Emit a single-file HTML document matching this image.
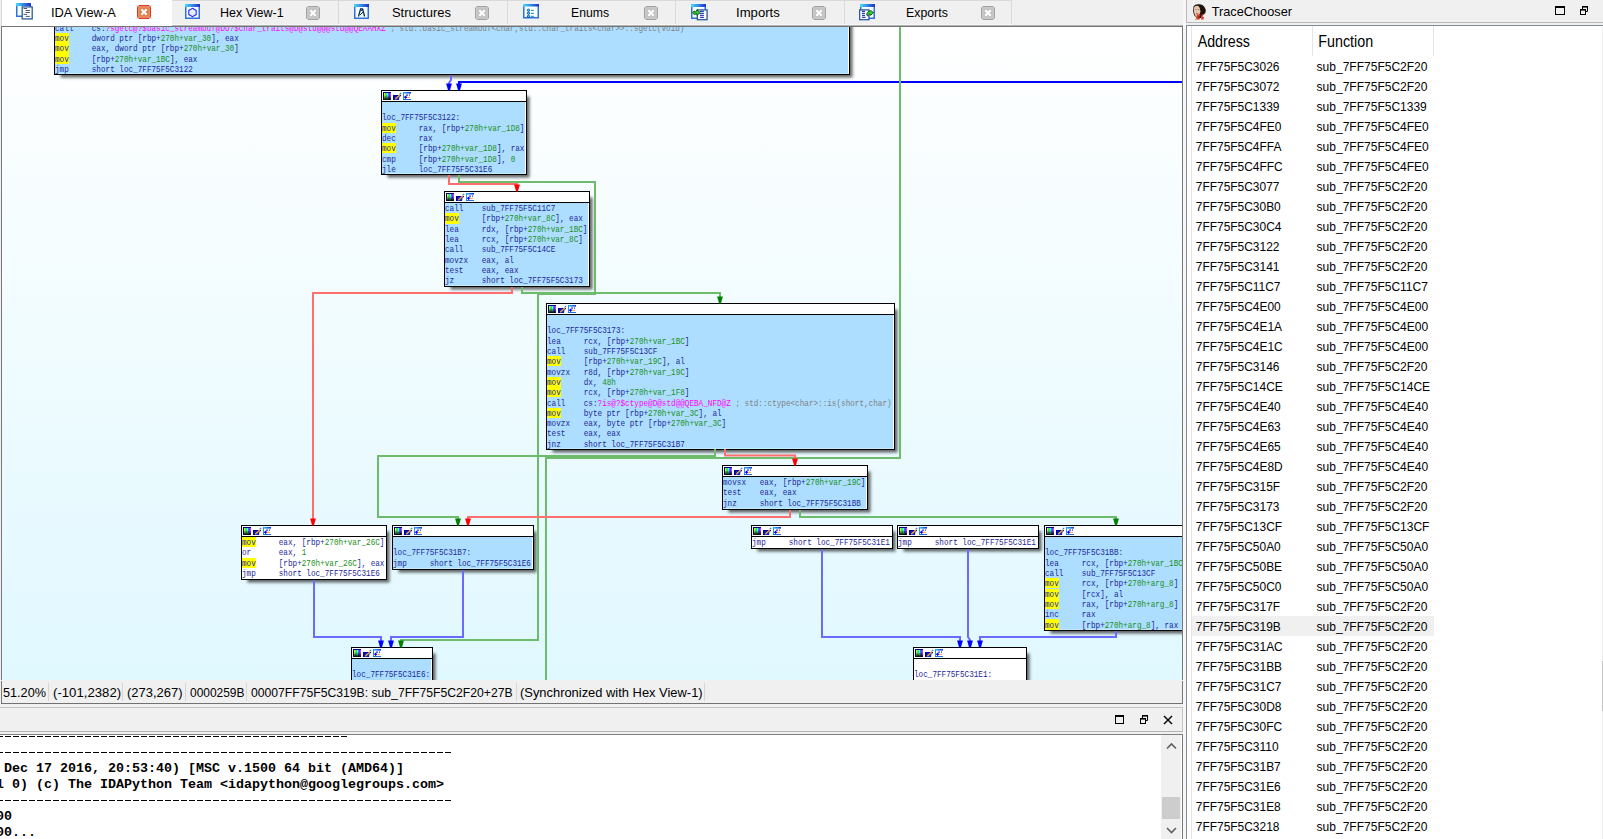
<!DOCTYPE html>
<html><head><meta charset="utf-8"><style>
*{box-sizing:border-box}
html,body{margin:0;padding:0}
body{width:1603px;height:839px;background:#f0f0f0;position:relative;overflow:hidden;font-family:"Liberation Sans",sans-serif;color:#000}
.abs{position:absolute}
.tx{position:absolute;white-space:nowrap;line-height:1}
#graph{position:absolute;left:2px;top:27px;width:1180px;height:653px;overflow:hidden;background:linear-gradient(#ffffff,#e0f8ff)}
.blk{position:absolute;border:1px solid #000;background:#fff;box-shadow:4px 4px 3px -1.5px rgba(0,0,0,.62)}
.hd{position:absolute;left:0;top:0;right:0;background:#fff;border-bottom:1px solid #000}
.hd .ic{position:absolute;left:1px;top:1px}
.bd{position:absolute;left:0;right:0;bottom:0;border-right:1px solid #fff;border-bottom:1px solid #c4eafe}
.bd pre{position:absolute;left:0;margin:0;font-family:"Liberation Mono",monospace;font-size:9.2px;transform:scaleX(0.8333);transform-origin:0 0;line-height:10.3px;color:#1c2898;white-space:pre}
.yb{position:absolute;left:0;width:14px;height:10.3px;background:#ffff00}
i{font-style:normal}
.g{color:#1a901a}.m{color:#ff00ff}.c{color:#808080}
#edges{position:absolute;left:0;top:0}
pre.out{position:absolute;margin:0;font-family:"Liberation Mono",monospace;font-weight:bold;font-size:13.33px;line-height:16px;white-space:pre;color:#000}
</style></head><body>
<div class="abs" style="left:1px;top:0;width:171px;height:26px;background:#fff;border-left:1px solid #d9d9d9"></div><div class="abs" style="left:16px;top:3px;line-height:0"><svg width="18" height="18" viewBox="0 0 18 18"><defs><linearGradient id="tg_ida" x1="0" x2="1"><stop offset="0" stop-color="#48dcff"/><stop offset="1" stop-color="#2030c8"/></linearGradient></defs><rect x="0.75" y="0.75" width="13.5" height="12.5" fill="#f6ffff" stroke="#2f70dc" stroke-width="1.5"/><rect x="0" y="0" width="15" height="3" fill="url(#tg_ida)"/><rect x="6.2" y="3.9" width="10" height="12" fill="#fff" stroke="#2a5c9c" stroke-width="1.3"/><path d="M7.6 5.5h3.6M9.6 7.5h4.3M9.6 9.5h4.3M7.6 11.4h3.6M9.6 13.4h4.3" stroke="#505860" stroke-width="1"/></svg></div><div class="tx" style="left:51.25px;top:7.32px;font-size:12.9px;transform:scaleX(0.9966);transform-origin:0 0">IDA View-A</div><div class="abs" style="left:137px;top:5px;line-height:0"><svg width="14" height="14" viewBox="0 0 14 14"><path d="M2 0.5H12L13.5 2V12L12 13.5H2L0.5 12V2Z" fill="#e27a4c" stroke="#de3420"/><rect x="1.9" y="1.9" width="10.2" height="10.2" fill="none" stroke="#f2a684" stroke-width="0.7"/><path d="M4.3 4.3L9.7 9.7M9.7 4.3L4.3 9.7" stroke="#fff" stroke-width="2.1"/></svg></div><div class="abs" style="left:172px;top:0;width:167px;height:26px;background:#f0f0f0;border-top:1px solid #d9d9d9;border-right:1px solid #d9d9d9"></div><div class="abs" style="left:172px;top:24px;width:167px;height:1px;background:#f8f8f8"></div><div class="abs" style="left:185px;top:4px;line-height:0"><svg width="18" height="18" viewBox="0 0 18 18"><defs><linearGradient id="tg_hex" x1="0" x2="1"><stop offset="0" stop-color="#48dcff"/><stop offset="1" stop-color="#2030c8"/></linearGradient></defs><rect x="0.75" y="0.75" width="13.5" height="13.5" fill="#f6ffff" stroke="#2f70dc" stroke-width="1.5"/><rect x="0" y="0" width="15" height="3" fill="url(#tg_hex)"/><path d="M7.5 4.3L11.2 6.4V10.6L7.5 12.7L3.8 10.6V6.4Z" fill="#e4eeff" stroke="#2828ff" stroke-width="1.1"/></svg></div><div class="tx" style="left:220.3px;top:7.32px;font-size:12.9px;transform:scaleX(0.9697);transform-origin:0 0">Hex View-1</div><div class="abs" style="left:306px;top:6px;line-height:0"><svg width="14" height="14" viewBox="0 0 14 14"><path d="M2 0.5H12L13.5 2V12L12 13.5H2L0.5 12V2Z" fill="#c2c2c2" stroke="#a2a2a2"/><rect x="1.9" y="1.9" width="10.2" height="10.2" fill="none" stroke="#d0d0d0" stroke-width="0.7"/><path d="M4.3 4.3L9.7 9.7M9.7 4.3L4.3 9.7" stroke="#fff" stroke-width="2.1"/></svg></div><div class="abs" style="left:339px;top:0;width:169px;height:26px;background:#f0f0f0;border-top:1px solid #d9d9d9;border-right:1px solid #d9d9d9"></div><div class="abs" style="left:339px;top:24px;width:169px;height:1px;background:#f8f8f8"></div><div class="abs" style="left:354px;top:4px;line-height:0"><svg width="18" height="18" viewBox="0 0 18 18"><defs><linearGradient id="tg_str" x1="0" x2="1"><stop offset="0" stop-color="#48dcff"/><stop offset="1" stop-color="#2030c8"/></linearGradient></defs><rect x="0.75" y="0.75" width="13.5" height="13.5" fill="#f6ffff" stroke="#2f70dc" stroke-width="1.5"/><rect x="0" y="0" width="15" height="3" fill="url(#tg_str)"/><path d="M4.5 12.5L6.6 4.8H8.6L10.6 12.5" fill="none" stroke="#0a2a5a" stroke-width="1.3"/><path d="M6.5 6.2h2.3" stroke="#0a2a5a" stroke-width="1.2"/><path d="M6 11L9 8" stroke="#0a2a5a" stroke-width="1"/></svg></div><div class="tx" style="left:392.4px;top:7.32px;font-size:12.9px;transform:scaleX(1.0026);transform-origin:0 0">Structures</div><div class="abs" style="left:475px;top:6px;line-height:0"><svg width="14" height="14" viewBox="0 0 14 14"><path d="M2 0.5H12L13.5 2V12L12 13.5H2L0.5 12V2Z" fill="#c2c2c2" stroke="#a2a2a2"/><rect x="1.9" y="1.9" width="10.2" height="10.2" fill="none" stroke="#d0d0d0" stroke-width="0.7"/><path d="M4.3 4.3L9.7 9.7M9.7 4.3L4.3 9.7" stroke="#fff" stroke-width="2.1"/></svg></div><div class="abs" style="left:508px;top:0;width:168px;height:26px;background:#f0f0f0;border-top:1px solid #d9d9d9;border-right:1px solid #d9d9d9"></div><div class="abs" style="left:508px;top:24px;width:168px;height:1px;background:#f8f8f8"></div><div class="abs" style="left:523px;top:4px;line-height:0"><svg width="18" height="18" viewBox="0 0 18 18"><g transform="translate(0,-0.5)"><defs><linearGradient id="tg_enum" x1="0" x2="1"><stop offset="0" stop-color="#48dcff"/><stop offset="1" stop-color="#2030c8"/></linearGradient></defs><rect x="0.75" y="0.75" width="14.5" height="13.5" fill="#f6ffff" stroke="#2f70dc" stroke-width="1.5"/><rect x="0" y="0" width="16" height="3" fill="url(#tg_enum)"/></g><g transform="translate(0,-0.1) scale(1,0.75)"><path d="M5.5 6.9L7.1 8.5L5.5 10.1L3.9 8.5Z" fill="#20e8ff" stroke="#002a80" stroke-width="0.9"/><path d="M8 8.5h2.8" stroke="#0050c8" stroke-width="1.1"/><path d="M5.5 10.9L7.1 12.5L5.5 14.1L3.9 12.5Z" fill="#20e8ff" stroke="#002a80" stroke-width="0.9"/><path d="M8 12.5h2.8" stroke="#0050c8" stroke-width="1.1"/><path d="M5.5 14.9L7.1 16.5L5.5 18.1L3.9 16.5Z" fill="#20e8ff" stroke="#002a80" stroke-width="0.9"/><path d="M8 16.5h2.8" stroke="#0050c8" stroke-width="1.1"/></g></svg></div><div class="tx" style="left:571px;top:7.32px;font-size:12.9px;transform:scaleX(0.9470);transform-origin:0 0">Enums</div><div class="abs" style="left:643.5px;top:6px;line-height:0"><svg width="14" height="14" viewBox="0 0 14 14"><path d="M2 0.5H12L13.5 2V12L12 13.5H2L0.5 12V2Z" fill="#c2c2c2" stroke="#a2a2a2"/><rect x="1.9" y="1.9" width="10.2" height="10.2" fill="none" stroke="#d0d0d0" stroke-width="0.7"/><path d="M4.3 4.3L9.7 9.7M9.7 4.3L4.3 9.7" stroke="#fff" stroke-width="2.1"/></svg></div><div class="abs" style="left:676px;top:0;width:169px;height:26px;background:#f0f0f0;border-top:1px solid #d9d9d9;border-right:1px solid #d9d9d9"></div><div class="abs" style="left:676px;top:24px;width:169px;height:1px;background:#f8f8f8"></div><div class="abs" style="left:691px;top:4px;line-height:0"><svg width="18" height="18" viewBox="0 0 18 18"><defs><linearGradient id="tg_imp" x1="0" x2="1"><stop offset="0" stop-color="#48dcff"/><stop offset="1" stop-color="#2030c8"/></linearGradient></defs><rect x="0.75" y="0.75" width="13.5" height="13.5" fill="#f6ffff" stroke="#2f70dc" stroke-width="1.5"/><rect x="0" y="0" width="15" height="3" fill="url(#tg_imp)"/><rect x="6.3" y="5.9" width="9.8" height="9.8" fill="#fff" stroke="#2a5c9c" stroke-width="1.3"/><path d="M9 7.3h3.9M9 9.3h3.9M9 11.3h3.9M9 13.3h3.9" stroke="#0010b0" stroke-width="1"/><path d="M1.5 8.5L3.2 7L4.3 8.3L6 5.8L9.2 8.6L6 11.3L5.8 9.7L3 10.5Z" fill="#30d030" stroke="#004000" stroke-width="0.8"/></svg></div><div class="tx" style="left:736.2px;top:7.32px;font-size:12.9px;transform:scaleX(1.0190);transform-origin:0 0">Imports</div><div class="abs" style="left:812px;top:6px;line-height:0"><svg width="14" height="14" viewBox="0 0 14 14"><path d="M2 0.5H12L13.5 2V12L12 13.5H2L0.5 12V2Z" fill="#c2c2c2" stroke="#a2a2a2"/><rect x="1.9" y="1.9" width="10.2" height="10.2" fill="none" stroke="#d0d0d0" stroke-width="0.7"/><path d="M4.3 4.3L9.7 9.7M9.7 4.3L4.3 9.7" stroke="#fff" stroke-width="2.1"/></svg></div><div class="abs" style="left:845px;top:0;width:167px;height:26px;background:#f0f0f0;border-top:1px solid #d9d9d9;border-right:1px solid #d9d9d9"></div><div class="abs" style="left:845px;top:24px;width:167px;height:1px;background:#f8f8f8"></div><div class="abs" style="left:859px;top:4px;line-height:0"><svg width="18" height="18" viewBox="0 0 18 18"><defs><linearGradient id="tg_exp" x1="0" x2="1"><stop offset="0" stop-color="#48dcff"/><stop offset="1" stop-color="#2030c8"/></linearGradient></defs><rect x="1.75" y="0.75" width="13.5" height="13.5" fill="#f6ffff" stroke="#2f70dc" stroke-width="1.5"/><rect x="1" y="0" width="15" height="3" fill="url(#tg_exp)"/><rect x="0.65" y="5.9" width="9.3" height="9.8" fill="#fff" stroke="#2a5c9c" stroke-width="1.3"/><path d="M3 7.3h3M3 9.3h3M3 11.3h3M3 13.3h3.5" stroke="#0010b0" stroke-width="1"/><path d="M7.6 10L9 8L11.6 6.5L14.6 8.6L11.5 11.4L10.8 10L8.4 12Z" fill="#30d030" stroke="#004000" stroke-width="0.8"/></svg></div><div class="tx" style="left:906.2px;top:7.32px;font-size:12.9px;transform:scaleX(0.9565);transform-origin:0 0">Exports</div><div class="abs" style="left:981px;top:6px;line-height:0"><svg width="14" height="14" viewBox="0 0 14 14"><path d="M2 0.5H12L13.5 2V12L12 13.5H2L0.5 12V2Z" fill="#c2c2c2" stroke="#a2a2a2"/><rect x="1.9" y="1.9" width="10.2" height="10.2" fill="none" stroke="#d0d0d0" stroke-width="0.7"/><path d="M4.3 4.3L9.7 9.7M9.7 4.3L4.3 9.7" stroke="#fff" stroke-width="2.1"/></svg></div><div class="abs" style="left:172px;top:25px;width:1011px;height:1px;background:#b4b4b4"></div><div class="abs" style="left:1px;top:26px;width:1182px;height:678px;border:1px solid #787878;border-top-color:#747474"></div><div id="graph"><div class="blk" style="left:52px;top:-67px;width:796px;height:115px"><div class="bd" style="top:0px;background:#addeff"><div class="yb" style="top:71.80px"></div><div class="yb" style="top:82.10px"></div><div class="yb" style="top:92.40px"></div><pre style="top:62.70px">
call    cs:<i class="m">?sgetc@?$basic_streambuf@DU?$char_traits@D@std@@@std@@QEAAHXZ</i><i class="c"> ; std::basic_streambuf&lt;char,std::char_traits&lt;char&gt;&gt;::sgetc(void)</i>
mov     dword ptr [rbp+<i class="g">270h+var_30</i>], eax
mov     eax, dword ptr [rbp+<i class="g">270h+var_30</i>]
mov     [rbp+<i class="g">270h+var_1BC</i>], eax
jmp     short loc_7FF75F5C3122</pre></div></div><div class="blk" style="left:379px;top:63px;width:146px;height:85px"><div class="hd" style="height:11px"><svg class="ic" width="30" height="10" viewBox="0 0 30 10"><defs><linearGradient id="rb1" x1="0" x2="1"><stop offset="0" stop-color="#ffff40"/><stop offset=".3" stop-color="#20e020"/><stop offset=".5" stop-color="#40ffff"/><stop offset=".72" stop-color="#3030ff"/><stop offset="1" stop-color="#ff40ff"/></linearGradient><linearGradient id="dk1" x1="0" x2="0" y1="0" y2="1"><stop offset="0.3" stop-color="#000" stop-opacity="0"/><stop offset="1" stop-color="#000" stop-opacity="1"/></linearGradient><linearGradient id="lb1" x1="0" x2="1"><stop offset="0" stop-color="#30c8ff"/><stop offset="1" stop-color="#1030d0"/></linearGradient></defs><rect x="0" y="0" width="8" height="8" fill="#000080"/><rect x="1" y="1" width="7" height="7" fill="url(#rb1)"/><rect x="1" y="1" width="7" height="7" fill="url(#dk1)"/><path d="M10 3h8v1.3h-1.5L16 8H11.3H10z" fill="#0000a0"/><path d="M11.6 4.3h4.6l-0.6 3.5h-4z" fill="#1030c0"/><path d="M12.3 7.3L17 2.6" stroke="#ffa428" stroke-width="1.3"/><path d="M16.8 2.2L18.2 0.8" stroke="#2a88b0" stroke-width="1.2"/><rect x="20" y="0" width="8" height="1.6" fill="url(#lb1)"/><rect x="20" y="0" width="1" height="8" fill="#2a90f0"/><rect x="20" y="7" width="8" height="1" fill="#2070e0"/><rect x="23" y="2.6" width="2" height="1" fill="#0000ff"/><rect x="26" y="2.5" width="1" height="1.2" fill="#1030e0"/><rect x="21" y="4.6" width="3" height="1.2" fill="#0000ff"/><rect x="22" y="3.8" width="1.2" height="3" fill="#0000ff"/><rect x="24" y="4.8" width="3" height="1" fill="#ff9a30"/></svg></div><div class="bd" style="top:11px;background:#addeff;border-bottom-color:#c4eafe"><div class="yb" style="top:20.60px"></div><div class="yb" style="top:41.20px"></div><pre style="top:1.2px">

loc_7FF75F5C3122:
mov     rax, [rbp+<i class="g">270h+var_1D8</i>]
dec     rax
mov     [rbp+<i class="g">270h+var_1D8</i>], rax
cmp     [rbp+<i class="g">270h+var_1D8</i>], <i class="g">0</i>
jle     loc_7FF75F5C31E6</pre></div></div><div class="blk" style="left:442px;top:164px;width:146px;height:96px"><div class="hd" style="height:11px"><svg class="ic" width="30" height="10" viewBox="0 0 30 10"><defs><linearGradient id="rb2" x1="0" x2="1"><stop offset="0" stop-color="#ffff40"/><stop offset=".3" stop-color="#20e020"/><stop offset=".5" stop-color="#40ffff"/><stop offset=".72" stop-color="#3030ff"/><stop offset="1" stop-color="#ff40ff"/></linearGradient><linearGradient id="dk2" x1="0" x2="0" y1="0" y2="1"><stop offset="0.3" stop-color="#000" stop-opacity="0"/><stop offset="1" stop-color="#000" stop-opacity="1"/></linearGradient><linearGradient id="lb2" x1="0" x2="1"><stop offset="0" stop-color="#30c8ff"/><stop offset="1" stop-color="#1030d0"/></linearGradient></defs><rect x="0" y="0" width="8" height="8" fill="#000080"/><rect x="1" y="1" width="7" height="7" fill="url(#rb2)"/><rect x="1" y="1" width="7" height="7" fill="url(#dk2)"/><path d="M10 3h8v1.3h-1.5L16 8H11.3H10z" fill="#0000a0"/><path d="M11.6 4.3h4.6l-0.6 3.5h-4z" fill="#1030c0"/><path d="M12.3 7.3L17 2.6" stroke="#ffa428" stroke-width="1.3"/><path d="M16.8 2.2L18.2 0.8" stroke="#2a88b0" stroke-width="1.2"/><rect x="20" y="0" width="8" height="1.6" fill="url(#lb2)"/><rect x="20" y="0" width="1" height="8" fill="#2a90f0"/><rect x="20" y="7" width="8" height="1" fill="#2070e0"/><rect x="23" y="2.6" width="2" height="1" fill="#0000ff"/><rect x="26" y="2.5" width="1" height="1.2" fill="#1030e0"/><rect x="21" y="4.6" width="3" height="1.2" fill="#0000ff"/><rect x="22" y="3.8" width="1.2" height="3" fill="#0000ff"/><rect x="24" y="4.8" width="3" height="1" fill="#ff9a30"/></svg></div><div class="bd" style="top:11px;background:#addeff;border-bottom-color:#c4eafe"><div class="yb" style="top:10.30px"></div><pre style="top:1.2px">
call    sub_7FF75F5C11C7
mov     [rbp+<i class="g">270h+var_8C</i>], eax
lea     rdx, [rbp+<i class="g">270h+var_1BC</i>]
lea     rcx, [rbp+<i class="g">270h+var_8C</i>]
call    sub_7FF75F5C14CE
movzx   eax, al
test    eax, eax
jz      short loc_7FF75F5C3173</pre></div></div><div class="blk" style="left:544px;top:276px;width:349px;height:147px"><div class="hd" style="height:11px"><svg class="ic" width="30" height="10" viewBox="0 0 30 10"><defs><linearGradient id="rb3" x1="0" x2="1"><stop offset="0" stop-color="#ffff40"/><stop offset=".3" stop-color="#20e020"/><stop offset=".5" stop-color="#40ffff"/><stop offset=".72" stop-color="#3030ff"/><stop offset="1" stop-color="#ff40ff"/></linearGradient><linearGradient id="dk3" x1="0" x2="0" y1="0" y2="1"><stop offset="0.3" stop-color="#000" stop-opacity="0"/><stop offset="1" stop-color="#000" stop-opacity="1"/></linearGradient><linearGradient id="lb3" x1="0" x2="1"><stop offset="0" stop-color="#30c8ff"/><stop offset="1" stop-color="#1030d0"/></linearGradient></defs><rect x="0" y="0" width="8" height="8" fill="#000080"/><rect x="1" y="1" width="7" height="7" fill="url(#rb3)"/><rect x="1" y="1" width="7" height="7" fill="url(#dk3)"/><path d="M10 3h8v1.3h-1.5L16 8H11.3H10z" fill="#0000a0"/><path d="M11.6 4.3h4.6l-0.6 3.5h-4z" fill="#1030c0"/><path d="M12.3 7.3L17 2.6" stroke="#ffa428" stroke-width="1.3"/><path d="M16.8 2.2L18.2 0.8" stroke="#2a88b0" stroke-width="1.2"/><rect x="20" y="0" width="8" height="1.6" fill="url(#lb3)"/><rect x="20" y="0" width="1" height="8" fill="#2a90f0"/><rect x="20" y="7" width="8" height="1" fill="#2070e0"/><rect x="23" y="2.6" width="2" height="1" fill="#0000ff"/><rect x="26" y="2.5" width="1" height="1.2" fill="#1030e0"/><rect x="21" y="4.6" width="3" height="1.2" fill="#0000ff"/><rect x="22" y="3.8" width="1.2" height="3" fill="#0000ff"/><rect x="24" y="4.8" width="3" height="1" fill="#ff9a30"/></svg></div><div class="bd" style="top:11px;background:#addeff;border-bottom-color:#c4eafe"><div class="yb" style="top:41.20px"></div><div class="yb" style="top:61.80px"></div><div class="yb" style="top:72.10px"></div><div class="yb" style="top:92.70px"></div><pre style="top:1.2px">

loc_7FF75F5C3173:
lea     rcx, [rbp+<i class="g">270h+var_1BC</i>]
call    sub_7FF75F5C13CF
mov     [rbp+<i class="g">270h+var_19C</i>], al
movzx   r8d, [rbp+<i class="g">270h+var_19C</i>]
mov     dx, <i class="g">48h</i>
mov     rcx, [rbp+<i class="g">270h+var_1F8</i>]
call    cs:<i class="m">?is@?$ctype@D@std@@QEBA_NFD@Z</i><i class="c"> ; std::ctype&lt;char&gt;::is(short,char)</i>
mov     byte ptr [rbp+<i class="g">270h+var_3C</i>], al
movzx   eax, byte ptr [rbp+<i class="g">270h+var_3C</i>]
test    eax, eax
jnz     short loc_7FF75F5C31B7</pre></div></div><div class="blk" style="left:720px;top:438px;width:146px;height:45px"><div class="hd" style="height:11px"><svg class="ic" width="30" height="10" viewBox="0 0 30 10"><defs><linearGradient id="rb4" x1="0" x2="1"><stop offset="0" stop-color="#ffff40"/><stop offset=".3" stop-color="#20e020"/><stop offset=".5" stop-color="#40ffff"/><stop offset=".72" stop-color="#3030ff"/><stop offset="1" stop-color="#ff40ff"/></linearGradient><linearGradient id="dk4" x1="0" x2="0" y1="0" y2="1"><stop offset="0.3" stop-color="#000" stop-opacity="0"/><stop offset="1" stop-color="#000" stop-opacity="1"/></linearGradient><linearGradient id="lb4" x1="0" x2="1"><stop offset="0" stop-color="#30c8ff"/><stop offset="1" stop-color="#1030d0"/></linearGradient></defs><rect x="0" y="0" width="8" height="8" fill="#000080"/><rect x="1" y="1" width="7" height="7" fill="url(#rb4)"/><rect x="1" y="1" width="7" height="7" fill="url(#dk4)"/><path d="M10 3h8v1.3h-1.5L16 8H11.3H10z" fill="#0000a0"/><path d="M11.6 4.3h4.6l-0.6 3.5h-4z" fill="#1030c0"/><path d="M12.3 7.3L17 2.6" stroke="#ffa428" stroke-width="1.3"/><path d="M16.8 2.2L18.2 0.8" stroke="#2a88b0" stroke-width="1.2"/><rect x="20" y="0" width="8" height="1.6" fill="url(#lb4)"/><rect x="20" y="0" width="1" height="8" fill="#2a90f0"/><rect x="20" y="7" width="8" height="1" fill="#2070e0"/><rect x="23" y="2.6" width="2" height="1" fill="#0000ff"/><rect x="26" y="2.5" width="1" height="1.2" fill="#1030e0"/><rect x="21" y="4.6" width="3" height="1.2" fill="#0000ff"/><rect x="22" y="3.8" width="1.2" height="3" fill="#0000ff"/><rect x="24" y="4.8" width="3" height="1" fill="#ff9a30"/></svg></div><div class="bd" style="top:11px;background:#addeff;border-bottom-color:#c4eafe"><pre style="top:1.2px">
movsx   eax, [rbp+<i class="g">270h+var_19C</i>]
test    eax, eax
jnz     short loc_7FF75F5C31BB</pre></div></div><div class="blk" style="left:239px;top:498px;width:146px;height:55px"><div class="hd" style="height:11px"><svg class="ic" width="30" height="10" viewBox="0 0 30 10"><defs><linearGradient id="rb5" x1="0" x2="1"><stop offset="0" stop-color="#ffff40"/><stop offset=".3" stop-color="#20e020"/><stop offset=".5" stop-color="#40ffff"/><stop offset=".72" stop-color="#3030ff"/><stop offset="1" stop-color="#ff40ff"/></linearGradient><linearGradient id="dk5" x1="0" x2="0" y1="0" y2="1"><stop offset="0.3" stop-color="#000" stop-opacity="0"/><stop offset="1" stop-color="#000" stop-opacity="1"/></linearGradient><linearGradient id="lb5" x1="0" x2="1"><stop offset="0" stop-color="#30c8ff"/><stop offset="1" stop-color="#1030d0"/></linearGradient></defs><rect x="0" y="0" width="8" height="8" fill="#000080"/><rect x="1" y="1" width="7" height="7" fill="url(#rb5)"/><rect x="1" y="1" width="7" height="7" fill="url(#dk5)"/><path d="M10 3h8v1.3h-1.5L16 8H11.3H10z" fill="#0000a0"/><path d="M11.6 4.3h4.6l-0.6 3.5h-4z" fill="#1030c0"/><path d="M12.3 7.3L17 2.6" stroke="#ffa428" stroke-width="1.3"/><path d="M16.8 2.2L18.2 0.8" stroke="#2a88b0" stroke-width="1.2"/><rect x="20" y="0" width="8" height="1.6" fill="url(#lb5)"/><rect x="20" y="0" width="1" height="8" fill="#2a90f0"/><rect x="20" y="7" width="8" height="1" fill="#2070e0"/><rect x="23" y="2.6" width="2" height="1" fill="#0000ff"/><rect x="26" y="2.5" width="1" height="1.2" fill="#1030e0"/><rect x="21" y="4.6" width="3" height="1.2" fill="#0000ff"/><rect x="22" y="3.8" width="1.2" height="3" fill="#0000ff"/><rect x="24" y="4.8" width="3" height="1" fill="#ff9a30"/></svg></div><div class="bd" style="top:11px;background:#ffffff;border-bottom-color:#fff"><div class="yb" style="top:0.00px"></div><div class="yb" style="top:20.60px"></div><pre style="top:1.2px">
mov     eax, [rbp+<i class="g">270h+var_26C</i>]
or      eax, <i class="g">1</i>
mov     [rbp+<i class="g">270h+var_26C</i>], eax
jmp     short loc_7FF75F5C31E6</pre></div></div><div class="blk" style="left:390px;top:498px;width:142px;height:45px"><div class="hd" style="height:11px"><svg class="ic" width="30" height="10" viewBox="0 0 30 10"><defs><linearGradient id="rb6" x1="0" x2="1"><stop offset="0" stop-color="#ffff40"/><stop offset=".3" stop-color="#20e020"/><stop offset=".5" stop-color="#40ffff"/><stop offset=".72" stop-color="#3030ff"/><stop offset="1" stop-color="#ff40ff"/></linearGradient><linearGradient id="dk6" x1="0" x2="0" y1="0" y2="1"><stop offset="0.3" stop-color="#000" stop-opacity="0"/><stop offset="1" stop-color="#000" stop-opacity="1"/></linearGradient><linearGradient id="lb6" x1="0" x2="1"><stop offset="0" stop-color="#30c8ff"/><stop offset="1" stop-color="#1030d0"/></linearGradient></defs><rect x="0" y="0" width="8" height="8" fill="#000080"/><rect x="1" y="1" width="7" height="7" fill="url(#rb6)"/><rect x="1" y="1" width="7" height="7" fill="url(#dk6)"/><path d="M10 3h8v1.3h-1.5L16 8H11.3H10z" fill="#0000a0"/><path d="M11.6 4.3h4.6l-0.6 3.5h-4z" fill="#1030c0"/><path d="M12.3 7.3L17 2.6" stroke="#ffa428" stroke-width="1.3"/><path d="M16.8 2.2L18.2 0.8" stroke="#2a88b0" stroke-width="1.2"/><rect x="20" y="0" width="8" height="1.6" fill="url(#lb6)"/><rect x="20" y="0" width="1" height="8" fill="#2a90f0"/><rect x="20" y="7" width="8" height="1" fill="#2070e0"/><rect x="23" y="2.6" width="2" height="1" fill="#0000ff"/><rect x="26" y="2.5" width="1" height="1.2" fill="#1030e0"/><rect x="21" y="4.6" width="3" height="1.2" fill="#0000ff"/><rect x="22" y="3.8" width="1.2" height="3" fill="#0000ff"/><rect x="24" y="4.8" width="3" height="1" fill="#ff9a30"/></svg></div><div class="bd" style="top:11px;background:#addeff;border-bottom-color:#c4eafe"><pre style="top:1.2px">

loc_7FF75F5C31B7:
jmp     short loc_7FF75F5C31E6</pre></div></div><div class="blk" style="left:749px;top:498px;width:142px;height:24px"><div class="hd" style="height:11px"><svg class="ic" width="30" height="10" viewBox="0 0 30 10"><defs><linearGradient id="rb7" x1="0" x2="1"><stop offset="0" stop-color="#ffff40"/><stop offset=".3" stop-color="#20e020"/><stop offset=".5" stop-color="#40ffff"/><stop offset=".72" stop-color="#3030ff"/><stop offset="1" stop-color="#ff40ff"/></linearGradient><linearGradient id="dk7" x1="0" x2="0" y1="0" y2="1"><stop offset="0.3" stop-color="#000" stop-opacity="0"/><stop offset="1" stop-color="#000" stop-opacity="1"/></linearGradient><linearGradient id="lb7" x1="0" x2="1"><stop offset="0" stop-color="#30c8ff"/><stop offset="1" stop-color="#1030d0"/></linearGradient></defs><rect x="0" y="0" width="8" height="8" fill="#000080"/><rect x="1" y="1" width="7" height="7" fill="url(#rb7)"/><rect x="1" y="1" width="7" height="7" fill="url(#dk7)"/><path d="M10 3h8v1.3h-1.5L16 8H11.3H10z" fill="#0000a0"/><path d="M11.6 4.3h4.6l-0.6 3.5h-4z" fill="#1030c0"/><path d="M12.3 7.3L17 2.6" stroke="#ffa428" stroke-width="1.3"/><path d="M16.8 2.2L18.2 0.8" stroke="#2a88b0" stroke-width="1.2"/><rect x="20" y="0" width="8" height="1.6" fill="url(#lb7)"/><rect x="20" y="0" width="1" height="8" fill="#2a90f0"/><rect x="20" y="7" width="8" height="1" fill="#2070e0"/><rect x="23" y="2.6" width="2" height="1" fill="#0000ff"/><rect x="26" y="2.5" width="1" height="1.2" fill="#1030e0"/><rect x="21" y="4.6" width="3" height="1.2" fill="#0000ff"/><rect x="22" y="3.8" width="1.2" height="3" fill="#0000ff"/><rect x="24" y="4.8" width="3" height="1" fill="#ff9a30"/></svg></div><div class="bd" style="top:11px;background:#ffffff;border-bottom-color:#fff"><pre style="top:1.2px">
jmp     short loc_7FF75F5C31E1</pre></div></div><div class="blk" style="left:895px;top:498px;width:142px;height:24px"><div class="hd" style="height:11px"><svg class="ic" width="30" height="10" viewBox="0 0 30 10"><defs><linearGradient id="rb8" x1="0" x2="1"><stop offset="0" stop-color="#ffff40"/><stop offset=".3" stop-color="#20e020"/><stop offset=".5" stop-color="#40ffff"/><stop offset=".72" stop-color="#3030ff"/><stop offset="1" stop-color="#ff40ff"/></linearGradient><linearGradient id="dk8" x1="0" x2="0" y1="0" y2="1"><stop offset="0.3" stop-color="#000" stop-opacity="0"/><stop offset="1" stop-color="#000" stop-opacity="1"/></linearGradient><linearGradient id="lb8" x1="0" x2="1"><stop offset="0" stop-color="#30c8ff"/><stop offset="1" stop-color="#1030d0"/></linearGradient></defs><rect x="0" y="0" width="8" height="8" fill="#000080"/><rect x="1" y="1" width="7" height="7" fill="url(#rb8)"/><rect x="1" y="1" width="7" height="7" fill="url(#dk8)"/><path d="M10 3h8v1.3h-1.5L16 8H11.3H10z" fill="#0000a0"/><path d="M11.6 4.3h4.6l-0.6 3.5h-4z" fill="#1030c0"/><path d="M12.3 7.3L17 2.6" stroke="#ffa428" stroke-width="1.3"/><path d="M16.8 2.2L18.2 0.8" stroke="#2a88b0" stroke-width="1.2"/><rect x="20" y="0" width="8" height="1.6" fill="url(#lb8)"/><rect x="20" y="0" width="1" height="8" fill="#2a90f0"/><rect x="20" y="7" width="8" height="1" fill="#2070e0"/><rect x="23" y="2.6" width="2" height="1" fill="#0000ff"/><rect x="26" y="2.5" width="1" height="1.2" fill="#1030e0"/><rect x="21" y="4.6" width="3" height="1.2" fill="#0000ff"/><rect x="22" y="3.8" width="1.2" height="3" fill="#0000ff"/><rect x="24" y="4.8" width="3" height="1" fill="#ff9a30"/></svg></div><div class="bd" style="top:11px;background:#ffffff;border-bottom-color:#fff"><pre style="top:1.2px">
jmp     short loc_7FF75F5C31E1</pre></div></div><div class="blk" style="left:1042px;top:498px;width:187px;height:106px"><div class="hd" style="height:11px"><svg class="ic" width="30" height="10" viewBox="0 0 30 10"><defs><linearGradient id="rb9" x1="0" x2="1"><stop offset="0" stop-color="#ffff40"/><stop offset=".3" stop-color="#20e020"/><stop offset=".5" stop-color="#40ffff"/><stop offset=".72" stop-color="#3030ff"/><stop offset="1" stop-color="#ff40ff"/></linearGradient><linearGradient id="dk9" x1="0" x2="0" y1="0" y2="1"><stop offset="0.3" stop-color="#000" stop-opacity="0"/><stop offset="1" stop-color="#000" stop-opacity="1"/></linearGradient><linearGradient id="lb9" x1="0" x2="1"><stop offset="0" stop-color="#30c8ff"/><stop offset="1" stop-color="#1030d0"/></linearGradient></defs><rect x="0" y="0" width="8" height="8" fill="#000080"/><rect x="1" y="1" width="7" height="7" fill="url(#rb9)"/><rect x="1" y="1" width="7" height="7" fill="url(#dk9)"/><path d="M10 3h8v1.3h-1.5L16 8H11.3H10z" fill="#0000a0"/><path d="M11.6 4.3h4.6l-0.6 3.5h-4z" fill="#1030c0"/><path d="M12.3 7.3L17 2.6" stroke="#ffa428" stroke-width="1.3"/><path d="M16.8 2.2L18.2 0.8" stroke="#2a88b0" stroke-width="1.2"/><rect x="20" y="0" width="8" height="1.6" fill="url(#lb9)"/><rect x="20" y="0" width="1" height="8" fill="#2a90f0"/><rect x="20" y="7" width="8" height="1" fill="#2070e0"/><rect x="23" y="2.6" width="2" height="1" fill="#0000ff"/><rect x="26" y="2.5" width="1" height="1.2" fill="#1030e0"/><rect x="21" y="4.6" width="3" height="1.2" fill="#0000ff"/><rect x="22" y="3.8" width="1.2" height="3" fill="#0000ff"/><rect x="24" y="4.8" width="3" height="1" fill="#ff9a30"/></svg></div><div class="bd" style="top:11px;background:#addeff;border-bottom-color:#c4eafe"><div class="yb" style="top:41.20px"></div><div class="yb" style="top:51.50px"></div><div class="yb" style="top:61.80px"></div><div class="yb" style="top:82.40px"></div><pre style="top:1.2px">

loc_7FF75F5C31BB:
lea     rcx, [rbp+<i class="g">270h+var_1BC</i>]
call    sub_7FF75F5C13CF
mov     rcx, [rbp+<i class="g">270h+arg_8</i>]
mov     [rcx], al
mov     rax, [rbp+<i class="g">270h+arg_8</i>]
inc     rax
mov     [rbp+<i class="g">270h+arg_8</i>], rax</pre></div></div><div class="blk" style="left:349px;top:620px;width:82px;height:114px"><div class="hd" style="height:11px"><svg class="ic" width="30" height="10" viewBox="0 0 30 10"><defs><linearGradient id="rb10" x1="0" x2="1"><stop offset="0" stop-color="#ffff40"/><stop offset=".3" stop-color="#20e020"/><stop offset=".5" stop-color="#40ffff"/><stop offset=".72" stop-color="#3030ff"/><stop offset="1" stop-color="#ff40ff"/></linearGradient><linearGradient id="dk10" x1="0" x2="0" y1="0" y2="1"><stop offset="0.3" stop-color="#000" stop-opacity="0"/><stop offset="1" stop-color="#000" stop-opacity="1"/></linearGradient><linearGradient id="lb10" x1="0" x2="1"><stop offset="0" stop-color="#30c8ff"/><stop offset="1" stop-color="#1030d0"/></linearGradient></defs><rect x="0" y="0" width="8" height="8" fill="#000080"/><rect x="1" y="1" width="7" height="7" fill="url(#rb10)"/><rect x="1" y="1" width="7" height="7" fill="url(#dk10)"/><path d="M10 3h8v1.3h-1.5L16 8H11.3H10z" fill="#0000a0"/><path d="M11.6 4.3h4.6l-0.6 3.5h-4z" fill="#1030c0"/><path d="M12.3 7.3L17 2.6" stroke="#ffa428" stroke-width="1.3"/><path d="M16.8 2.2L18.2 0.8" stroke="#2a88b0" stroke-width="1.2"/><rect x="20" y="0" width="8" height="1.6" fill="url(#lb10)"/><rect x="20" y="0" width="1" height="8" fill="#2a90f0"/><rect x="20" y="7" width="8" height="1" fill="#2070e0"/><rect x="23" y="2.6" width="2" height="1" fill="#0000ff"/><rect x="26" y="2.5" width="1" height="1.2" fill="#1030e0"/><rect x="21" y="4.6" width="3" height="1.2" fill="#0000ff"/><rect x="22" y="3.8" width="1.2" height="3" fill="#0000ff"/><rect x="24" y="4.8" width="3" height="1" fill="#ff9a30"/></svg></div><div class="bd" style="top:11px;background:#addeff;border-bottom-color:#c4eafe"><div class="yb" style="top:20.60px"></div><pre style="top:1.2px">

loc_7FF75F5C31E6:
mov     eax, [rbp+<i class="g">270h+var_26C</i>]</pre></div></div><div class="blk" style="left:911px;top:620px;width:114px;height:114px"><div class="hd" style="height:11px"><svg class="ic" width="30" height="10" viewBox="0 0 30 10"><defs><linearGradient id="rb11" x1="0" x2="1"><stop offset="0" stop-color="#ffff40"/><stop offset=".3" stop-color="#20e020"/><stop offset=".5" stop-color="#40ffff"/><stop offset=".72" stop-color="#3030ff"/><stop offset="1" stop-color="#ff40ff"/></linearGradient><linearGradient id="dk11" x1="0" x2="0" y1="0" y2="1"><stop offset="0.3" stop-color="#000" stop-opacity="0"/><stop offset="1" stop-color="#000" stop-opacity="1"/></linearGradient><linearGradient id="lb11" x1="0" x2="1"><stop offset="0" stop-color="#30c8ff"/><stop offset="1" stop-color="#1030d0"/></linearGradient></defs><rect x="0" y="0" width="8" height="8" fill="#000080"/><rect x="1" y="1" width="7" height="7" fill="url(#rb11)"/><rect x="1" y="1" width="7" height="7" fill="url(#dk11)"/><path d="M10 3h8v1.3h-1.5L16 8H11.3H10z" fill="#0000a0"/><path d="M11.6 4.3h4.6l-0.6 3.5h-4z" fill="#1030c0"/><path d="M12.3 7.3L17 2.6" stroke="#ffa428" stroke-width="1.3"/><path d="M16.8 2.2L18.2 0.8" stroke="#2a88b0" stroke-width="1.2"/><rect x="20" y="0" width="8" height="1.6" fill="url(#lb11)"/><rect x="20" y="0" width="1" height="8" fill="#2a90f0"/><rect x="20" y="7" width="8" height="1" fill="#2070e0"/><rect x="23" y="2.6" width="2" height="1" fill="#0000ff"/><rect x="26" y="2.5" width="1" height="1.2" fill="#1030e0"/><rect x="21" y="4.6" width="3" height="1.2" fill="#0000ff"/><rect x="22" y="3.8" width="1.2" height="3" fill="#0000ff"/><rect x="24" y="4.8" width="3" height="1" fill="#ff9a30"/></svg></div><div class="bd" style="top:11px;background:#ffffff;border-bottom-color:#fff"><div class="yb" style="top:20.60px"></div><pre style="top:1.2px">

loc_7FF75F5C31E1:
mov     eax, [rbp+<i class="g">270h+var_26C</i>]</pre></div></div><svg id="edges" width="1180" height="653"><polyline points="449,48 449,53 447,56 447,61" fill="none" stroke="#6a6aff" stroke-width="2" stroke-linejoin="miter"/><polygon points="444.1,56.5 449.9,56.5 447.9,63.5 446.1,63.5" fill="#0000ff"/><polyline points="1181,55 457,55 457,61" fill="none" stroke="#0000ff" stroke-width="2" stroke-linejoin="miter"/><polygon points="454.1,56.5 459.9,56.5 457.9,63.5 456.1,63.5" fill="#0000ff"/><polyline points="447,148 447,157 515,157 515,162" fill="none" stroke="#ff6e6e" stroke-width="2" stroke-linejoin="miter"/><polygon points="512.1,157.5 517.9,157.5 515.9,164.5 514.1,164.5" fill="#ff0000"/><polyline points="457,148 457,155 593,155 593,267 536,267 536,613 399,613 399,618" fill="none" stroke="#6cbc6c" stroke-width="2" stroke-linejoin="miter"/><polygon points="396.1,613.5 401.9,613.5 399.9,620.5 398.1,620.5" fill="#008000"/><polyline points="510,260 510,266 311,266 311,496" fill="none" stroke="#ff6e6e" stroke-width="2" stroke-linejoin="miter"/><polygon points="308.1,491.5 313.9,491.5 311.9,498.5 310.1,498.5" fill="#ff0000"/><polyline points="520,260 520,266 718,266 718,274" fill="none" stroke="#6cbc6c" stroke-width="2" stroke-linejoin="miter"/><polygon points="715.1,269.5 720.9,269.5 718.9,276.5 717.1,276.5" fill="#008000"/><polyline points="713,422 713,429 376,429 376,490 456,490 456,496" fill="none" stroke="#6cbc6c" stroke-width="2" stroke-linejoin="miter"/><polygon points="453.1,491.5 458.9,491.5 456.9,498.5 455.1,498.5" fill="#008000"/><polyline points="898,-1 898,431 544,431 544,663" fill="none" stroke="#6cbc6c" stroke-width="2" stroke-linejoin="miter"/><polyline points="723,422 723,428.5 793,428.5 793,436" fill="none" stroke="#ff6e6e" stroke-width="2" stroke-linejoin="miter"/><polygon points="790.1,431.5 795.9,431.5 793.9,438.5 792.1,438.5" fill="#ff0000"/><polyline points="788,483 788,490 466,490 466,496" fill="none" stroke="#ff6e6e" stroke-width="2" stroke-linejoin="miter"/><polygon points="463.1,491.5 468.9,491.5 466.9,498.5 465.1,498.5" fill="#ff0000"/><polyline points="798,483 798,490 1114,490 1114,496" fill="none" stroke="#6cbc6c" stroke-width="2" stroke-linejoin="miter"/><polygon points="1111.1,491.5 1116.9,491.5 1114.9,498.5 1113.1,498.5" fill="#008000"/><polyline points="312,553 312,610 379,610 379,618" fill="none" stroke="#6a6aff" stroke-width="2" stroke-linejoin="miter"/><polygon points="376.1,613.5 381.9,613.5 379.9,620.5 378.1,620.5" fill="#0000ff"/><polyline points="461,543 461,610 389,610 389,618" fill="none" stroke="#6a6aff" stroke-width="2" stroke-linejoin="miter"/><polygon points="386.1,613.5 391.9,613.5 389.9,620.5 388.1,620.5" fill="#0000ff"/><polyline points="820,522 820,610 958,610 958,618" fill="none" stroke="#6a6aff" stroke-width="2" stroke-linejoin="miter"/><polygon points="955.1,613.5 960.9,613.5 958.9,620.5 957.1,620.5" fill="#0000ff"/><polyline points="966,522 966,610 968,613 968,618" fill="none" stroke="#6a6aff" stroke-width="2" stroke-linejoin="miter"/><polygon points="965.1,613.5 970.9,613.5 968.9,620.5 967.1,620.5" fill="#0000ff"/><polyline points="1114,604 1114,610 978,610 978,618" fill="none" stroke="#6a6aff" stroke-width="2" stroke-linejoin="miter"/><polygon points="975.1,613.5 980.9,613.5 978.9,620.5 977.1,620.5" fill="#0000ff"/></svg></div><div class="tx" style="left:3.2px;top:686.52px;font-size:12.9px;transform:scaleX(0.9832);transform-origin:0 0">51.20%</div><div class="tx" style="left:52.7px;top:686.52px;font-size:12.9px;transform:scaleX(1.0217);transform-origin:0 0">(-101,2382)</div><div class="tx" style="left:127px;top:686.52px;font-size:12.9px;transform:scaleX(1.0057);transform-origin:0 0">(273,267)</div><div class="tx" style="left:189.5px;top:686.52px;font-size:12.9px;transform:scaleX(0.9269);transform-origin:0 0">0000259B</div><div class="tx" style="left:251.4px;top:686.52px;font-size:12.9px;transform:scaleX(0.9445);transform-origin:0 0">00007FF75F5C319B: sub_7FF75F5C2F20+27B</div><div class="tx" style="left:520px;top:686.52px;font-size:12.9px;transform:scaleX(1.0008);transform-origin:0 0">(Synchronized with Hex View-1)</div><div class="abs" style="left:48px;top:683px;width:1px;height:18px;background:#d5d5d5"></div><div class="abs" style="left:122px;top:683px;width:1px;height:18px;background:#d5d5d5"></div><div class="abs" style="left:185px;top:683px;width:1px;height:18px;background:#d5d5d5"></div><div class="abs" style="left:246px;top:683px;width:1px;height:18px;background:#d5d5d5"></div><div class="abs" style="left:516px;top:683px;width:1px;height:18px;background:#d5d5d5"></div><div class="abs" style="left:704px;top:683px;width:1px;height:18px;background:#d5d5d5"></div><div class="abs" style="left:1px;top:680px;width:1182px;height:1px;background:#f0f0f0"></div><div class="abs" style="left:1px;top:703px;width:1182px;height:1px;background:#727272"></div><div class="abs" style="left:0;top:707px;width:1183px;height:25px;border-top:1px solid #c4c4c4;border-bottom:1px solid #b4b4b4;border-right:1px solid #c4c4c4"></div><svg class="abs" style="left:1110px;top:711px" width="70" height="18" viewBox="0 0 70 18"><rect x="5.5" y="4.5" width="8" height="8" fill="none" stroke="#000" stroke-width="1"/><rect x="5" y="4" width="9" height="2" fill="#000"/><rect x="30.5" y="7.5" width="5" height="5" fill="none" stroke="#000"/><path d="M32.5 7.5V4.5h5v5h-2" fill="none" stroke="#000"/><rect x="32" y="4" width="6" height="1.6" fill="#000"/><rect x="30" y="7" width="6" height="1.6" fill="#000"/><path d="M54 5L62 13M62 5L54 13" stroke="#000" stroke-width="1.4"/></svg><div class="abs" style="left:0;top:734px;width:1183px;height:105px;background:#fff;border-top:1px solid #808080;border-right:1px solid #787878;overflow:hidden"><pre class="out" style="left:-4px;top:-6px">


 Dec 17 2016, 20:53:40) [MSC v.1500 64 bit (AMD64)]
l 0) (c) The IDAPython Team &lt;idapython@googlegroups.com&gt;

00
00...</pre><div class="abs" style="left:-4px;top:1px;width:352px;height:1px;background:repeating-linear-gradient(90deg,transparent 0 1px,#000 1px 7px,transparent 7px 8px)"></div><div class="abs" style="left:-4px;top:17px;width:456px;height:1px;background:repeating-linear-gradient(90deg,transparent 0 1px,#000 1px 7px,transparent 7px 8px)"></div><div class="abs" style="left:-4px;top:65px;width:456px;height:1px;background:repeating-linear-gradient(90deg,transparent 0 1px,#000 1px 7px,transparent 7px 8px)"></div><div class="abs" style="left:1161px;top:0;width:20px;height:105px;background:#f0f0f0"></div><div class="abs" style="left:1162px;top:62px;width:18px;height:22px;background:#cdcdcd"></div><svg class="abs" style="left:1161px;top:0" width="20" height="105"><path d="M6 13.5 L10.5 9 L15 13.5" fill="none" stroke="#606060" stroke-width="1.6"/><path d="M6 93 L10.5 97.5 L15 93" fill="none" stroke="#606060" stroke-width="1.6"/></svg></div><div class="abs" style="left:1183px;top:0;width:3px;height:839px;background:#f7f7f7"></div><div class="abs" style="left:1186px;top:0;width:417px;height:23px;background:#f0f0f0;border-left:1px solid #bababa;border-bottom:1px solid #bababa"></div><svg class="abs" style="left:1191px;top:2px" width="17" height="18" viewBox="0 0 17 18"><path d="M2.5 4.5Q4 1.8 8 2.2Q12.5 2.5 14 6Q15.5 8 14.5 10.5Q13.5 12.5 11.5 13L10 16H6L3 13Q1.5 9 2.5 4.5Z" fill="#1e120c"/><path d="M3.2 5Q5 3.2 7.5 4Q9.5 6 9.5 9.5Q9 12.5 7 14L5.5 15Q3.5 13 3 10Q2.7 7 3.2 5Z" fill="#e6c6ae"/><path d="M4 7.5h1.5M6.8 7.5h1.5" stroke="#9a7a68" stroke-width="0.8"/><path d="M5 11.5q1 .8 2 0" stroke="#b04030" stroke-width="0.8" fill="none"/><path d="M5 17.5L6 12.5H9.5L9 14.5H7.5L7.3 15.5H9L8.6 17.5Z" fill="#e23a20"/><path d="M10 17.5L10.8 12.5H12L11.6 15H13L12.6 17.5Z" fill="#e23a20"/><path d="M3.5 17.5Q5 16 6 16.5L5.5 17.8Z" fill="#c89878"/></svg><div class="tx" style="left:1211.7px;top:5.64px;font-size:12.75px">TraceChooser</div><svg class="abs" style="left:1550px;top:3px" width="45" height="16" viewBox="0 0 45 16"><rect x="5.5" y="3.5" width="9" height="8" fill="none" stroke="#000"/><rect x="5" y="3" width="10" height="2" fill="#000"/><rect x="30.5" y="6.5" width="5" height="5" fill="none" stroke="#000"/><path d="M32.5 6.5V3.5h5v5h-2" fill="none" stroke="#000"/><rect x="32" y="3" width="6" height="1.6" fill="#000"/><rect x="30" y="6" width="6" height="1.6" fill="#000"/></svg><div class="abs" style="left:1186px;top:25px;width:417px;height:814px;background:#fff;border-top:1px solid #828a92;border-left:1px solid #828a92"></div><div class="abs" style="left:1191px;top:26px;width:1px;height:813px;background:#e6e6e6"></div><div class="tx" style="left:1197.7px;top:33.95px;font-size:14.25px;transform:scaleY(1.12);transform-origin:0 0">Address</div><div class="abs" style="left:1312px;top:26px;width:1px;height:30px;background:#e5e5e5"></div><div class="tx" style="left:1318.3px;top:33.94px;font-size:14.3px;transform:scaleY(1.12);transform-origin:0 0">Function</div><div class="abs" style="left:1433px;top:26px;width:1px;height:30px;background:#e5e5e5"></div><div class="tx" style="left:1195.8px;top:62.44px;font-size:11.95px">7FF75F5C3026</div><div class="tx" style="left:1316.6px;top:61.44px;font-size:12.03px">sub_7FF75F5C2F20</div><div class="tx" style="left:1195.8px;top:82.44px;font-size:11.95px">7FF75F5C3072</div><div class="tx" style="left:1316.6px;top:81.44px;font-size:12.03px">sub_7FF75F5C2F20</div><div class="tx" style="left:1195.8px;top:102.44px;font-size:11.95px">7FF75F5C1339</div><div class="tx" style="left:1316.6px;top:101.44px;font-size:12.03px">sub_7FF75F5C1339</div><div class="tx" style="left:1195.8px;top:122.44px;font-size:11.95px">7FF75F5C4FE0</div><div class="tx" style="left:1316.6px;top:121.44px;font-size:12.03px">sub_7FF75F5C4FE0</div><div class="tx" style="left:1195.8px;top:142.44px;font-size:11.95px">7FF75F5C4FFA</div><div class="tx" style="left:1316.6px;top:141.44px;font-size:12.03px">sub_7FF75F5C4FE0</div><div class="tx" style="left:1195.8px;top:162.44px;font-size:11.95px">7FF75F5C4FFC</div><div class="tx" style="left:1316.6px;top:161.44px;font-size:12.03px">sub_7FF75F5C4FE0</div><div class="tx" style="left:1195.8px;top:182.44px;font-size:11.95px">7FF75F5C3077</div><div class="tx" style="left:1316.6px;top:181.44px;font-size:12.03px">sub_7FF75F5C2F20</div><div class="tx" style="left:1195.8px;top:202.44px;font-size:11.95px">7FF75F5C30B0</div><div class="tx" style="left:1316.6px;top:201.44px;font-size:12.03px">sub_7FF75F5C2F20</div><div class="tx" style="left:1195.8px;top:222.44px;font-size:11.95px">7FF75F5C30C4</div><div class="tx" style="left:1316.6px;top:221.44px;font-size:12.03px">sub_7FF75F5C2F20</div><div class="tx" style="left:1195.8px;top:242.44px;font-size:11.95px">7FF75F5C3122</div><div class="tx" style="left:1316.6px;top:241.44px;font-size:12.03px">sub_7FF75F5C2F20</div><div class="tx" style="left:1195.8px;top:262.44px;font-size:11.95px">7FF75F5C3141</div><div class="tx" style="left:1316.6px;top:261.44px;font-size:12.03px">sub_7FF75F5C2F20</div><div class="tx" style="left:1195.8px;top:282.44px;font-size:11.95px">7FF75F5C11C7</div><div class="tx" style="left:1316.6px;top:281.44px;font-size:12.03px">sub_7FF75F5C11C7</div><div class="tx" style="left:1195.8px;top:302.44px;font-size:11.95px">7FF75F5C4E00</div><div class="tx" style="left:1316.6px;top:301.44px;font-size:12.03px">sub_7FF75F5C4E00</div><div class="tx" style="left:1195.8px;top:322.44px;font-size:11.95px">7FF75F5C4E1A</div><div class="tx" style="left:1316.6px;top:321.44px;font-size:12.03px">sub_7FF75F5C4E00</div><div class="tx" style="left:1195.8px;top:342.44px;font-size:11.95px">7FF75F5C4E1C</div><div class="tx" style="left:1316.6px;top:341.44px;font-size:12.03px">sub_7FF75F5C4E00</div><div class="tx" style="left:1195.8px;top:362.44px;font-size:11.95px">7FF75F5C3146</div><div class="tx" style="left:1316.6px;top:361.44px;font-size:12.03px">sub_7FF75F5C2F20</div><div class="tx" style="left:1195.8px;top:382.44px;font-size:11.95px">7FF75F5C14CE</div><div class="tx" style="left:1316.6px;top:381.44px;font-size:12.03px">sub_7FF75F5C14CE</div><div class="tx" style="left:1195.8px;top:402.44px;font-size:11.95px">7FF75F5C4E40</div><div class="tx" style="left:1316.6px;top:401.44px;font-size:12.03px">sub_7FF75F5C4E40</div><div class="tx" style="left:1195.8px;top:422.44px;font-size:11.95px">7FF75F5C4E63</div><div class="tx" style="left:1316.6px;top:421.44px;font-size:12.03px">sub_7FF75F5C4E40</div><div class="tx" style="left:1195.8px;top:442.44px;font-size:11.95px">7FF75F5C4E65</div><div class="tx" style="left:1316.6px;top:441.44px;font-size:12.03px">sub_7FF75F5C4E40</div><div class="tx" style="left:1195.8px;top:462.44px;font-size:11.95px">7FF75F5C4E8D</div><div class="tx" style="left:1316.6px;top:461.44px;font-size:12.03px">sub_7FF75F5C4E40</div><div class="tx" style="left:1195.8px;top:482.44px;font-size:11.95px">7FF75F5C315F</div><div class="tx" style="left:1316.6px;top:481.44px;font-size:12.03px">sub_7FF75F5C2F20</div><div class="tx" style="left:1195.8px;top:502.44px;font-size:11.95px">7FF75F5C3173</div><div class="tx" style="left:1316.6px;top:501.44px;font-size:12.03px">sub_7FF75F5C2F20</div><div class="tx" style="left:1195.8px;top:522.44px;font-size:11.95px">7FF75F5C13CF</div><div class="tx" style="left:1316.6px;top:521.44px;font-size:12.03px">sub_7FF75F5C13CF</div><div class="tx" style="left:1195.8px;top:542.44px;font-size:11.95px">7FF75F5C50A0</div><div class="tx" style="left:1316.6px;top:541.44px;font-size:12.03px">sub_7FF75F5C50A0</div><div class="tx" style="left:1195.8px;top:562.44px;font-size:11.95px">7FF75F5C50BE</div><div class="tx" style="left:1316.6px;top:561.44px;font-size:12.03px">sub_7FF75F5C50A0</div><div class="tx" style="left:1195.8px;top:582.44px;font-size:11.95px">7FF75F5C50C0</div><div class="tx" style="left:1316.6px;top:581.44px;font-size:12.03px">sub_7FF75F5C50A0</div><div class="tx" style="left:1195.8px;top:602.44px;font-size:11.95px">7FF75F5C317F</div><div class="tx" style="left:1316.6px;top:601.44px;font-size:12.03px">sub_7FF75F5C2F20</div><div class="abs" style="left:1192px;top:616px;width:242px;height:20px;background:#f0f0f0"></div><div class="tx" style="left:1195.8px;top:622.44px;font-size:11.95px">7FF75F5C319B</div><div class="tx" style="left:1316.6px;top:621.44px;font-size:12.03px">sub_7FF75F5C2F20</div><div class="tx" style="left:1195.8px;top:642.44px;font-size:11.95px">7FF75F5C31AC</div><div class="tx" style="left:1316.6px;top:641.44px;font-size:12.03px">sub_7FF75F5C2F20</div><div class="tx" style="left:1195.8px;top:662.44px;font-size:11.95px">7FF75F5C31BB</div><div class="tx" style="left:1316.6px;top:661.44px;font-size:12.03px">sub_7FF75F5C2F20</div><div class="tx" style="left:1195.8px;top:682.44px;font-size:11.95px">7FF75F5C31C7</div><div class="tx" style="left:1316.6px;top:681.44px;font-size:12.03px">sub_7FF75F5C2F20</div><div class="tx" style="left:1195.8px;top:702.44px;font-size:11.95px">7FF75F5C30D8</div><div class="tx" style="left:1316.6px;top:701.44px;font-size:12.03px">sub_7FF75F5C2F20</div><div class="tx" style="left:1195.8px;top:722.44px;font-size:11.95px">7FF75F5C30FC</div><div class="tx" style="left:1316.6px;top:721.44px;font-size:12.03px">sub_7FF75F5C2F20</div><div class="tx" style="left:1195.8px;top:742.44px;font-size:11.95px">7FF75F5C3110</div><div class="tx" style="left:1316.6px;top:741.44px;font-size:12.03px">sub_7FF75F5C2F20</div><div class="tx" style="left:1195.8px;top:762.44px;font-size:11.95px">7FF75F5C31B7</div><div class="tx" style="left:1316.6px;top:761.44px;font-size:12.03px">sub_7FF75F5C2F20</div><div class="tx" style="left:1195.8px;top:782.44px;font-size:11.95px">7FF75F5C31E6</div><div class="tx" style="left:1316.6px;top:781.44px;font-size:12.03px">sub_7FF75F5C2F20</div><div class="tx" style="left:1195.8px;top:802.44px;font-size:11.95px">7FF75F5C31E8</div><div class="tx" style="left:1316.6px;top:801.44px;font-size:12.03px">sub_7FF75F5C2F20</div><div class="tx" style="left:1195.8px;top:822.44px;font-size:11.95px">7FF75F5C3218</div><div class="tx" style="left:1316.6px;top:821.44px;font-size:12.03px">sub_7FF75F5C2F20</div><div class="abs" style="left:1602px;top:27px;width:1px;height:812px;background:#efefef"></div><div class="abs" style="left:1601.5px;top:661px;width:1.5px;height:50px;background:#c4c4c4"></div></body></html>
